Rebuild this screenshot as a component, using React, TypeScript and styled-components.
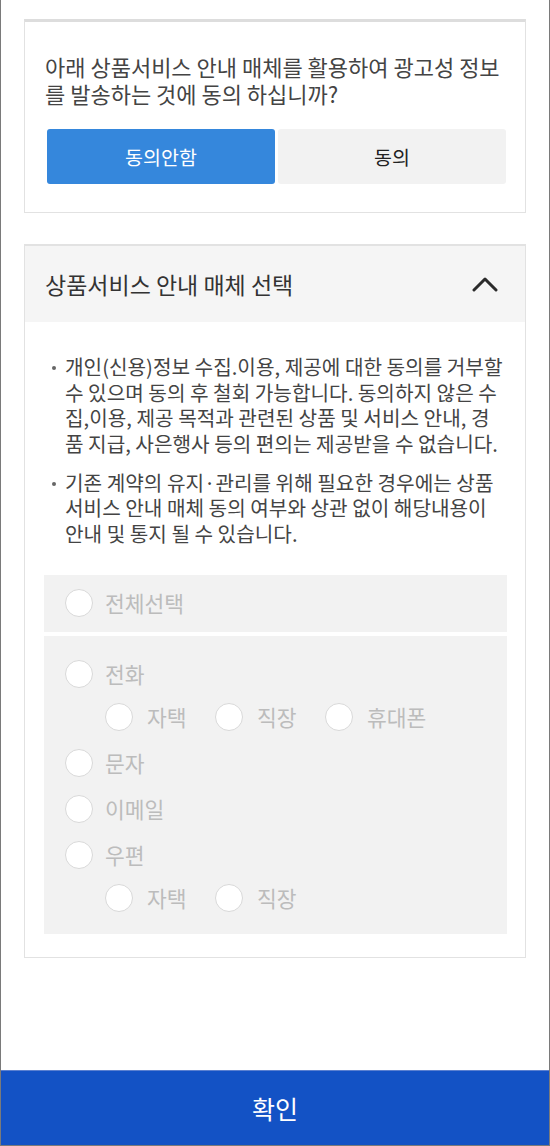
import React from "react";
import styled, { createGlobalStyle } from "styled-components";

const GlobalStyle = createGlobalStyle`
  html, body {
    margin: 0;
    padding: 0;
    background: #ffffff;
  }
  body {
    font-family: "Noto Sans CJK KR", "Noto Sans", sans-serif;
  }
  * {
    box-sizing: border-box;
  }
`;

const Screen = styled.div`
  width: 550px;
  height: 1146px;
  display: flex;
  flex-direction: column;
  border-left: 1px solid #7a7a7a;
  border-right: 1px solid #7a7a7a;
  border-bottom: 1px solid #7a7a7a;
  background: #ffffff;
`;

const Content = styled.div`
  flex: 1;
  padding: 19px 23px 0;
  display: flex;
  flex-direction: column;
  gap: 31px;
`;

const Card = styled.section<{ $thickTop?: boolean }>`
  border: 1px solid #e2e2e2;
  border-top: ${({ $thickTop }) =>
    $thickTop ? "3px solid #dddddd" : "2px solid #e2e2e2"};
  background: #ffffff;
`;

const QuestionBody = styled.div`
  padding: 31px 19px 28px 20px;
`;

const Question = styled.p`
  margin: 0 0 22px;
  font-size: 22px;
  line-height: 27px;
  color: #444444;
`;

const ChoiceRow = styled.div`
  display: grid;
  grid-template-columns: 1fr 1fr;
  gap: 3px;
  padding-left: 2px;
`;

const ChoiceButton = styled.button<{ $active?: boolean }>`
  height: 55px;
  border: none;
  border-radius: 3px;
  font-family: inherit;
  font-size: 19.5px;
  background: ${({ $active }) => ($active ? "#3587dc" : "#f2f2f2")};
  color: ${({ $active }) => ($active ? "#ffffff" : "#222222")};
  cursor: pointer;
`;

const AccordionHeader = styled.div`
  height: 76px;
  display: flex;
  align-items: center;
  justify-content: space-between;
  padding: 0 27px 0 20px;
  background: #f5f5f5;
`;

const AccordionTitle = styled.h2`
  margin: 0;
  font-size: 23px;
  font-weight: 400;
  color: #333333;
`;

const AccordionBody = styled.div`
  padding: 32px 18px 23px 19px;
`;

const NoticeList = styled.ul`
  list-style: none;
  margin: 0 0 29px;
  padding: 0;
`;

const NoticeItem = styled.li`
  position: relative;
  padding-left: 21px;
  font-size: 20.2px;
  line-height: 25.5px;
  color: #444444;

  & + & {
    margin-top: 13.5px;
  }

  &::before {
    content: "";
    position: absolute;
    left: 8px;
    top: 12px;
    width: 4px;
    height: 4px;
    border-radius: 50%;
    background: #666666;
  }
`;

const OptionBox = styled.div<{ $compact?: boolean }>`
  background: #f2f2f2;
  padding: ${({ $compact }) => ($compact ? "14px 21px 15px" : "24px 21px 22px")};
  display: flex;
  flex-direction: column;
  gap: 18px;

  & + & {
    margin-top: 4px;
  }
`;

const OptionGroup = styled.div`
  display: flex;
  flex-direction: column;
  gap: 15px;
`;

const Option = styled.label`
  display: flex;
  align-items: center;
  gap: 12px;
  font-size: 21.5px;
  line-height: 28px;
  color: #bcbcbc;
`;

const SubOptions = styled.div`
  display: flex;
  padding-left: 40px;
`;

const SubOption = styled(Option)`
  width: 110px;
  gap: 14px;
`;

const Radio = styled.span`
  flex: none;
  width: 28px;
  height: 28px;
  border-radius: 50%;
  background: #ffffff;
  border: 1.5px solid #d9d9d9;
`;

const ConfirmButton = styled.button`
  height: 75px;
  border: none;
  border-top: 1px solid #5b80d0;
  background: #1352c5;
  color: #ffffff;
  font-family: inherit;
  font-size: 25px;
  cursor: pointer;
`;

const ChevronUp = () => (
  <svg width="26" height="16" viewBox="0 0 26 16" fill="none">
    <path
      d="M2 14 L13 3 L24 14"
      stroke="#2b2b2b"
      strokeWidth="3"
      strokeLinecap="round"
      strokeLinejoin="round"
    />
  </svg>
);

const App: React.FC = () => {
  return (
    <>
      <GlobalStyle />
      <Screen>
        <Content>
          <Card $thickTop>
            <QuestionBody>
              <Question>
                아래 상품서비스 안내 매체를 활용하여 광고성 정보를 발송하는 것에 동의 하십니까?
              </Question>
              <ChoiceRow>
                <ChoiceButton $active>동의안함</ChoiceButton>
                <ChoiceButton>동의</ChoiceButton>
              </ChoiceRow>
            </QuestionBody>
          </Card>

          <Card>
            <AccordionHeader>
              <AccordionTitle>상품서비스 안내 매체 선택</AccordionTitle>
              <ChevronUp />
            </AccordionHeader>
            <AccordionBody>
              <NoticeList>
                <NoticeItem>
                  개인(신용)정보 수집.이용, 제공에 대한 동의를 거부할 수 있으며 동의 후 철회 가능합니다. 동의하지 않은 수집,이용, 제공 목적과 관련된 상품 및 서비스 안내, 경품 지급, 사은행사 등의 편의는 제공받을 수 없습니다.
                </NoticeItem>
                <NoticeItem>
                  기존 계약의 유지·관리를 위해 필요한 경우에는 상품서비스 안내 매체 동의 여부와 상관 없이 해당내용이 안내 및 통지 될 수 있습니다.
                </NoticeItem>
              </NoticeList>

              <OptionBox $compact>
                <Option>
                  <Radio />
                  전체선택
                </Option>
              </OptionBox>

              <OptionBox>
                <OptionGroup>
                  <Option>
                    <Radio />
                    전화
                  </Option>
                  <SubOptions>
                    <SubOption>
                      <Radio />
                      자택
                    </SubOption>
                    <SubOption>
                      <Radio />
                      직장
                    </SubOption>
                    <SubOption>
                      <Radio />
                      휴대폰
                    </SubOption>
                  </SubOptions>
                </OptionGroup>
                <Option>
                  <Radio />
                  문자
                </Option>
                <Option>
                  <Radio />
                  이메일
                </Option>
                <OptionGroup>
                  <Option>
                    <Radio />
                    우편
                  </Option>
                  <SubOptions>
                    <SubOption>
                      <Radio />
                      자택
                    </SubOption>
                    <SubOption>
                      <Radio />
                      직장
                    </SubOption>
                  </SubOptions>
                </OptionGroup>
              </OptionBox>
            </AccordionBody>
          </Card>
        </Content>

        <ConfirmButton>확인</ConfirmButton>
      </Screen>
    </>
  );
};

export default App;
